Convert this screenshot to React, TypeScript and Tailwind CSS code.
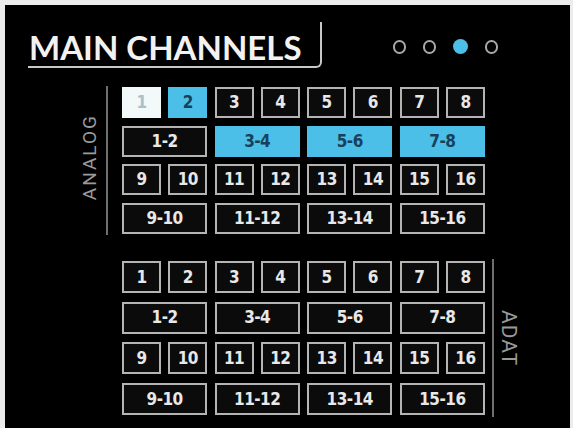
import React from "react";

type Cell = { label: string; span: 1 | 2; state?: "white" | "blue" };

const singles = (from: number): Cell[] =>
  Array.from({ length: 8 }, (_, i) => ({ label: String(from + i), span: 1 as const }));
const pairs = (from: number): Cell[] =>
  Array.from({ length: 4 }, (_, i) => ({
    label: `${from + i * 2}-${from + i * 2 + 1}`,
    span: 2 as const,
  }));

const upper: Cell[] = [
  ...singles(1).map((c, i) => (i === 0 ? { ...c, state: "white" as const } : i === 1 ? { ...c, state: "blue" as const } : c)),
  ...pairs(1).map((c, i) => (i > 0 ? { ...c, state: "blue" as const } : c)),
  ...singles(9),
  ...pairs(9),
];
const lower: Cell[] = [...singles(1), ...pairs(1), ...singles(9), ...pairs(9)];

function Btn({ c }: { c: Cell }) {
  const base =
    "flex items-center justify-center border-2 text-[17px] font-bold leading-none tracking-[-0.5px]";
  const st =
    c.state === "white"
      ? "bg-[#f3f8f8] border-[#f3f8f8] text-[#a9c2ca]"
      : c.state === "blue"
      ? "bg-[#4cbfe8] border-[#4cbfe8] text-[#17415c]"
      : "bg-[#0b0b0b] border-[#b4b4b4] text-[#e8e8e8]";
  return (
    <div
      className={`${base} ${st} ${c.span === 2 ? "col-span-2" : ""}`}
      style={{ fontFamily: '"DejaVu Sans Condensed", "Liberation Sans Narrow", "Roboto", sans-serif' }}
    >
      {c.label}
    </div>
  );
}

function Grid({ cells, rowH, gapY }: { cells: Cell[]; rowH: string; gapY: string }) {
  return (
    <div className={`grid w-[363px] grid-cols-8 gap-x-[7.3px] ${gapY} ${rowH}`}>
      {cells.map((c, i) => (
        <Btn key={i} c={c} />
      ))}
    </div>
  );
}

export default function App() {
  return (
    <div className="h-[428px] w-[573px] bg-[#ececec] pl-[5px] pr-[3px] pt-[5px]">
      <div className="h-full w-full bg-black" style={{ fontFamily: "Roboto, sans-serif" }}>
        {/* Header */}
        <div className="flex items-start pt-[17px]">
          <div className="ml-[23px] h-[46px] w-[294px] rounded-br-[6px] border-b-2 border-r-2 border-[#c8c8c8] pl-[1px] pt-[9px]">
            <span
              className="block whitespace-nowrap text-[33px] font-bold leading-none text-[#f2f2f2]"
              style={{ fontFamily: 'Lato, "Liberation Sans", sans-serif' }}
            >
              MAIN CHANNELS
            </span>
          </div>
          <div className="ml-[71px] mt-[17px] flex items-center gap-[17px]">
            <div className="h-[14px] w-[13px] rounded-full border-2 border-[#a8a8a8]" />
            <div className="h-[14px] w-[13px] rounded-full border-2 border-[#a8a8a8]" />
            <div className="h-[15px] w-[15px] rounded-full bg-[#4cbfe8]" />
            <div className="h-[14px] w-[13px] rounded-full border-2 border-[#a8a8a8]" />
          </div>
        </div>

        {/* Analog */}
        <div className="mt-[18px] flex">
          <div className="ml-[75px] flex w-[28px] items-center justify-start border-r-2 border-[#6f6f6f]">
            <span className="-mt-[6px] rotate-180 text-[19px] leading-none tracking-[2px] text-[#9a9a9a] [writing-mode:vertical-rl]">
              ANALOG
            </span>
          </div>
          <div className="ml-[14px] py-[1px]">
            <Grid cells={upper} rowH="grid-rows-[31px_31px_31px_31px]" gapY="gap-y-[7.7px]" />
          </div>
        </div>

        {/* ADAT */}
        <div className="mt-[24px] flex">
          <div className="ml-[117px] py-[2px]">
            <Grid cells={lower} rowH="grid-rows-[32px_32px_32px_32px]" gapY="gap-y-[8.7px]" />
          </div>
          <div className="ml-[7px] flex w-[26px] items-center border-l-2 border-[#6f6f6f] pl-[4px]">
            <span className="text-[21px] leading-none tracking-[1px] text-[#9a9a9a] [writing-mode:vertical-rl]">
              ADAT
            </span>
          </div>
        </div>
      </div>
    </div>
  );
}
